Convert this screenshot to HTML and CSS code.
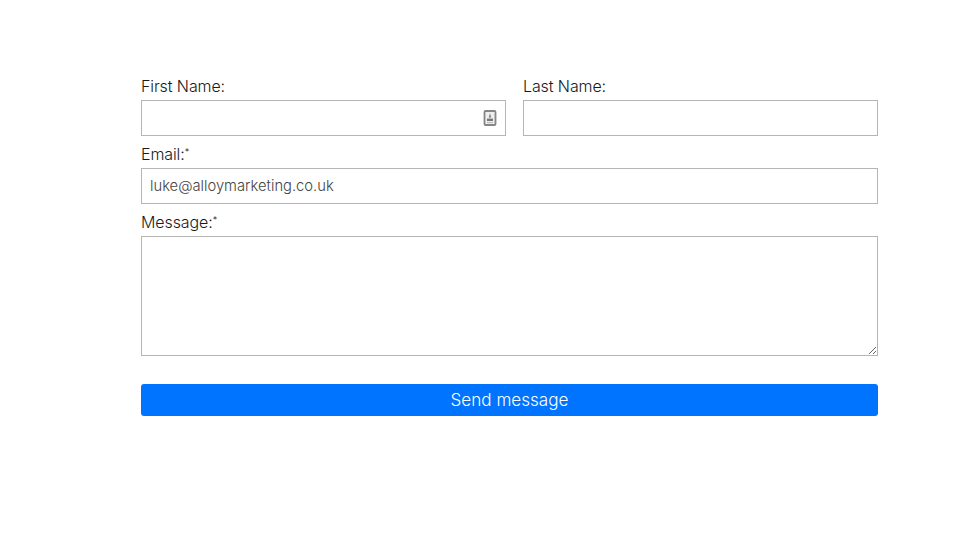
FILE: index.html
```html
<!DOCTYPE html>
<html lang="en">
<head>
<meta charset="utf-8">
<title>Contact form</title>
<link rel="stylesheet" href="styles.css">
</head>
<body>
<form class="form">
  <div class="name-row">
    <div class="field">
      <label class="label" for="first">First Name:</label>
      <div class="input-wrap">
        <input class="input" id="first" type="text">
        <svg class="contact-icon" width="14" height="16" viewBox="0 0 14 16" aria-hidden="true">
          <rect x="1.5" y="1" width="11" height="14" rx="1" fill="#eee" stroke="#858585" stroke-width="1.8"/>
          <path d="M7 3.2 8.2 7.6H5.8z" fill="#777"/>
          <path d="M4 8.6h6v2.4H4z" fill="#777"/>
          <path d="M4 12.6h6" stroke="#b5b5b5" stroke-width="1"/>
        </svg>
      </div>
    </div>
    <div class="field">
      <label class="label" for="last">Last Name:</label>
      <input class="input" id="last" type="text">
    </div>
  </div>
  <div class="field">
    <label class="label" for="email">Email:<sup class="req">*</sup></label>
    <input class="input" id="email" type="email" value="luke@alloymarketing.co.uk">
  </div>
  <div class="field">
    <label class="label" for="message">Message:<sup class="req">*</sup></label>
    <textarea class="input textarea" id="message"></textarea>
  </div>
  <button class="send" type="button">Send message</button>
</form>
</body>
</html>
```

FILE: styles.css
```css
* { box-sizing: border-box; }
html, body { margin: 0; background: #fff; }
body {
  font-family: "Inter", "Lato", sans-serif;
  font-weight: 300;
  color: #1a1a1a;
  height: 537px;
  overflow: hidden;
}
.form {
  width: 737px;
  margin-left: 141px;
  padding-top: 74px;
}
.name-row {
  display: grid;
  grid-template-columns: 365px 355px;
  column-gap: 17px;
}
.field { margin-bottom: 6px; }
.label {
  display: block;
  font-size: 16px;
  letter-spacing: -0.1px;
  line-height: 24px;
  margin-bottom: 2px;
}
.req {
  font-size: 9px;
  line-height: 0;
  vertical-align: 5px;
}
.input-wrap { position: relative; }
.input {
  display: block;
  width: 100%;
  height: 36px;
  border: 1px solid #b5b5b5;
  border-radius: 0;
  padding: 0 8px 1px;
  font-family: inherit;
  font-weight: 300;
  font-size: 14.75px;
  color: #444;
  background: #fff;
  outline: none;
}
.textarea { height: 120px; padding: 8px; resize: vertical; }
.contact-icon {
  position: absolute;
  right: 9px;
  top: 10px;
}
.send {
  display: block;
  width: 100%;
  height: 32px;
  margin-top: 28px;
  padding: 0 0 1px;
  border: 0;
  border-radius: 3px;
  background: #0074ff;
  color: #fff;
  font-family: inherit;
  font-weight: 300;
  font-size: 17.1px;
  cursor: pointer;
}
```
